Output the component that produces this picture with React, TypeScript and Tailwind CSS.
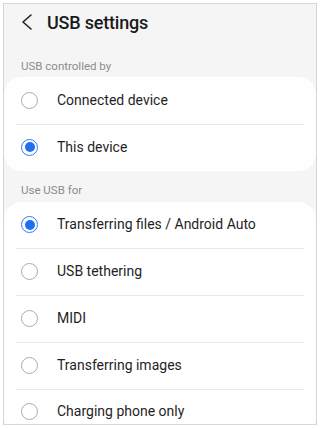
type Option = { label: string; checked?: boolean };

const controlled: Option[] = [
  { label: "Connected device" },
  { label: "This device", checked: true },
];

const useFor: Option[] = [
  { label: "Transferring files / Android Auto", checked: true },
  { label: "USB tethering" },
  { label: "MIDI" },
  { label: "Transferring images" },
  { label: "Charging phone only" },
];

function Radio({ checked }: { checked?: boolean }) {
  if (checked) {
    return (
      <span className="flex h-[17px] w-[17px] items-center justify-center rounded-full border-[1.5px] border-[#2f7cf6]">
        <span className="h-[10px] w-[10px] rounded-full bg-[#1f6ff2]" />
      </span>
    );
  }
  return <span className="h-[17px] w-[17px] rounded-full border border-[#ababab]" />;
}

function OptionList({ options }: { options: Option[] }) {
  return (
    <div className="rounded-[18px] bg-white">
      {options.map((o, i) => (
        <div key={o.label} className="relative flex h-[46.75px] items-center pl-[17px]">
          {i > 0 && <div className="absolute left-[12px] right-[12px] top-0 h-px bg-[#e9e9e9]" />}
          <Radio checked={o.checked} />
          <span className="ml-[19px] text-[14px] text-[#1f1f1f]">{o.label}</span>
        </div>
      ))}
    </div>
  );
}

function SectionLabel({ children }: { children: string }) {
  return <div className="px-[17px] text-[11.5px] leading-[16px] text-[#8c8c8c]">{children}</div>;
}

export default function App() {
  return (
    <div className="h-[428px] w-[320px] bg-white p-[3px] font-['Roboto',sans-serif]">
      <div className="h-full overflow-hidden border border-[#d6d6d6] bg-[#f5f5f5]">
        <div className="flex h-[34px] items-center pl-[17px] pt-[2px]">
          <svg width="12" height="16" viewBox="0 0 12 16" fill="none" stroke="#222" strokeWidth="1.6" strokeLinecap="round" strokeLinejoin="round">
            <polyline points="10,1 2,8 10,15" />
          </svg>
          <span className="ml-[14px] text-[18px] font-medium tracking-[-0.2px] text-[#1a1a1a]">USB settings</span>
        </div>
        <div className="flex h-[39px] items-end pb-[3px]">
          <SectionLabel>USB controlled by</SectionLabel>
        </div>
        <OptionList options={controlled} />
        <div className="flex h-[31px] items-start pt-[11px]">
          <SectionLabel>Use USB for</SectionLabel>
        </div>
        <OptionList options={useFor} />
      </div>
    </div>
  );
}
